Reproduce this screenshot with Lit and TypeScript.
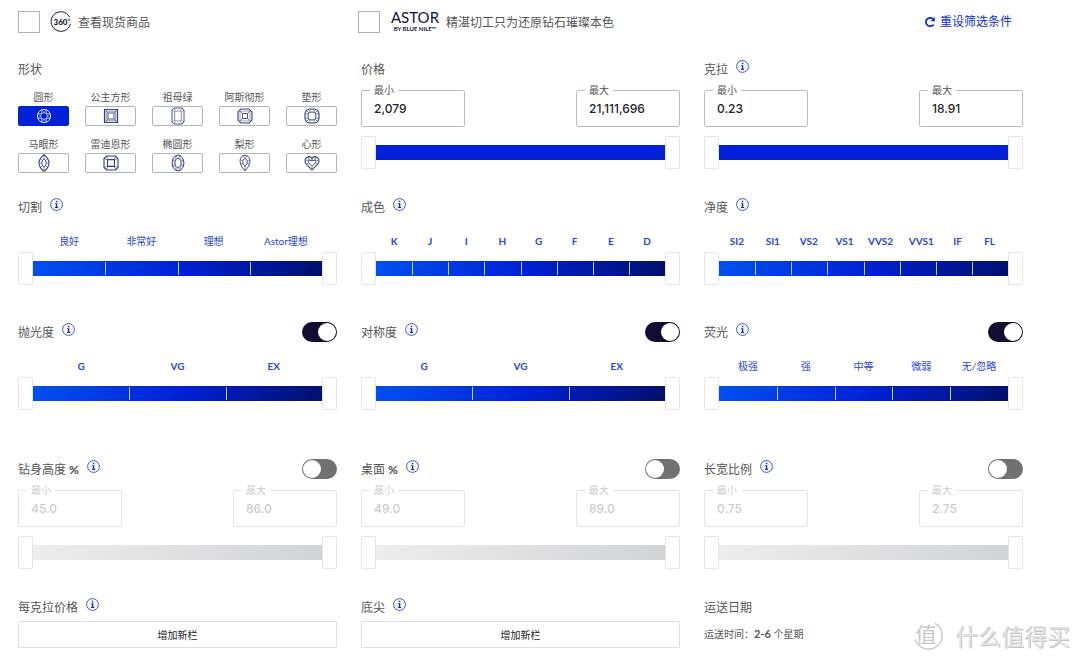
import { LitElement, html, css, svg, nothing, SVGTemplateResult, TemplateResult } from "lit";
import { customElement, property, state } from "lit/decorators.js";
import { classMap } from "lit/directives/class-map.js";
import { styleMap } from "lit/directives/style-map.js";

/* Two-handled slider with an optional row of grade labels and dividers. */
@customElement("range-slider")
export class RangeSlider extends LitElement {
  @property() name = "";
  @property({ type: Array }) grades: string[] = [];
  @property({ type: Array }) weights: number[] = [];
  @property({ type: Boolean }) disabled = false;

  static styles = css`
    :host {
      display: block;
    }
    .grades {
      display: grid;
      padding: 0 15px;
      margin: 17px 0 4px;
      font: 700 10px/14px Lato, "Noto Sans CJK SC", sans-serif;
      color: #2a45df;
      text-align: center;
      white-space: nowrap;
    }
    .grade {
      display: flex;
      justify-content: center;
      font-weight: 700;
    }
    .cjk {
      font-weight: 400;
    }
    .slider {
      display: grid;
      align-items: center;
      height: 33px;
    }
    .bar,
    .handle {
      grid-area: 1 / 1;
    }
    .bar {
      display: flex;
      height: 15px;
      margin: 0 15px;
      background: #0021d8;
    }
    .graded {
      background: linear-gradient(90deg, #0050f0, #0020d6 52%, #00106e);
    }
    .off {
      background: linear-gradient(90deg, #ededed, #d2d3d5);
    }
    .segment {
      flex: 1;
      margin: 1px 0;
      border-left: 1px solid #c3cdf8;
    }
    .segment:first-child {
      border-left-color: transparent;
    }
    .handle {
      appearance: none;
      width: 100%;
      height: 33px;
      margin: 0;
      background: transparent;
      pointer-events: none;
    }
    .handle::-webkit-slider-runnable-track {
      height: 33px;
      background: transparent;
    }
    .handle::-webkit-slider-thumb {
      appearance: none;
      box-sizing: border-box;
      width: 15px;
      height: 33px;
      border: 1px solid #e6e6e6;
      border-radius: 2px;
      background: #fff;
      pointer-events: auto;
    }
  `;

  render() {
    const columns = this.grades.map((_, i) => `${this.weights[i] ?? 1}fr`).join(" ");
    return html`
      ${this.grades.length
        ? html`<div class="grades" style=${styleMap({ gridTemplateColumns: columns })}>
            ${this.grades.map(
              (g) =>
                html`<span class=${classMap({ grade: true, cjk: /[^\x00-\x7f]/.test(g) })}>${g}</span>`
            )}
          </div>`
        : nothing}
      <div class="slider">
        <div class=${classMap({ bar: true, graded: this.grades.length > 0, off: this.disabled })}>
          ${this.grades.map(() => html`<span class="segment"></span>`)}
        </div>
        <input class="handle" type="range" min="0" max="100" value="0"
          aria-label="${this.name} 最小" ?disabled=${this.disabled} />
        <input class="handle" type="range" min="0" max="100" value="100"
          aria-label="${this.name} 最大" ?disabled=${this.disabled} />
      </div>
    `;
  }
}

interface Filter {
  name: string;
  percent?: boolean;
  info?: boolean;
  toggle?: boolean;
  range?: [string, string];
  grades?: string[];
  weights?: number[];
  add?: boolean;
  note?: TemplateResult;
}

const SHAPES: { name: string; art: SVGTemplateResult }[] = [
  {
    name: "圆形",
    art: svg`<circle cx="9" cy="9" r="6.6"/><circle cx="9" cy="9" r="3.4" stroke-width=".7"/>
      <path d="M6.6 2.9 9 5.4 11.4 2.9 11.5 6.5 15.1 6.6 12.6 9 15.1 11.4 11.5 11.5 11.4 15.1 9 12.6 6.6 15.1 6.5 11.5 2.9 11.4 5.4 9 2.9 6.6 6.5 6.5Z" stroke-width=".5"/>`,
  },
  {
    name: "公主方形",
    art: svg`<path d="M2.5 2.5H15.5V15.5H2.5Z" stroke-width="1.2"/><path d="M6 6H12V12H6Z"/>
      <path d="M2.5 2.5 6 6M15.5 2.5 12 6M15.5 15.5 12 12M2.5 15.5 6 12M4.2 4.2H13.8V13.8H4.2Z" stroke-width=".6"/>`,
  },
  {
    name: "祖母绿",
    art: svg`<path d="M5 1H13L15 3V15L13 17H5L3 15V3Z"/><path d="M6.5 4H11.5L12.3 5V13L11.5 14H6.5L5.7 13V5Z" stroke-width=".6"/>
      <path d="M5 1 6.5 4M13 1 11.5 4M15 3 12.3 5M15 15 12.3 13M13 17 11.5 14M5 17 6.5 14M3 15 5.7 13M3 3 5.7 5" stroke-width=".5"/>`,
  },
  {
    name: "阿斯彻形",
    art: svg`<path d="M5 2H13L16 5V13L13 16H5L2 13V5Z" stroke-width="1.1"/><path d="M5.7 4H12.3L14 5.7V12.3L12.3 14H5.7L4 12.3V5.7Z" stroke-width=".5"/>
      <path d="M6.5 6.5H11.5V11.5H6.5Z"/><path d="M3.5 3.5 6.5 6.5M14.5 3.5 11.5 6.5M14.5 14.5 11.5 11.5M3.5 14.5 6.5 11.5" stroke-width=".6"/>`,
  },
  {
    name: "垫形",
    art: svg`<rect x="2" y="2" width="14" height="14" rx="5" stroke-width="1.1"/><path d="M6.5 5.4Q9 4.7 11.5 5.4L12.6 6.5Q13.3 9 12.6 11.5L11.5 12.6Q9 13.3 6.5 12.6L5.4 11.5Q4.7 9 5.4 6.5Z"/>
      <path d="M3.3 3.3 6 6M14.7 3.3 12 6M14.7 14.7 12 12M3.3 14.7 6 12M7 2 6.5 5.4M11 2 11.5 5.4M7 16 6.5 12.6M11 16 11.5 12.6M2 7 5.4 6.5M2 11 5.4 11.5M16 7 12.6 6.5M16 11 12.6 11.5" stroke-width=".6"/>`,
  },
  {
    name: "马眼形",
    art: svg`<path d="M9 .7Q14 4.5 14 9T9 17.3Q4 13.5 4 9T9 .7Z" stroke-width="1.1"/><path d="M9 4.7Q11.2 6.8 11.2 9T9 13.3Q6.8 11.2 6.8 9T9 4.7Z"/>
      <path d="M9 .7V4.7M9 13.3V17.3M4.2 9H6.8M11.2 9H13.8M5.6 4.8 7.9 6.8M12.4 4.8 10.1 6.8M5.6 13.2 7.9 11.2M12.4 13.2 10.1 11.2" stroke-width=".6"/>`,
  },
  {
    name: "雷迪恩形",
    art: svg`<path d="M4.6 2H13.4L16 4.6V13.4L13.4 16H4.6L2 13.4V4.6Z" stroke-width="1.1"/><path d="M6 5.6H12L12.4 6V12L12 12.4H6L5.6 12V6Z" stroke-width="1.1"/>
      <path d="M4.6 2 5.8 5.8 2 4.6M13.4 2 12.2 5.8 16 4.6M13.4 16 12.2 12.2 16 13.4M4.6 16 5.8 12.2 2 13.4" stroke-width=".6"/>`,
  },
  {
    name: "椭圆形",
    art: svg`<ellipse cx="9" cy="9" rx="5.9" ry="7.9" stroke-width="1"/><ellipse cx="9" cy="9" rx="3" ry="4.4" stroke-width=".8"/>
      <path d="M6.8 1.8 9 4.6 11.2 1.8 11.2 6.3 14.2 5.8 12 9 14.2 12.2 11.2 11.7 11.2 16.2 9 13.4 6.8 16.2 6.8 11.7 3.8 12.2 6 9 3.8 5.8 6.8 6.3Z" stroke-width=".5"/>`,
  },
  {
    name: "梨形",
    art: svg`<path d="M9 17Q4 12 4 7.2C4 3.5 6.2 1.3 9 1.3S14 3.5 14 7.2Q14 12 9 17Z"/><path d="M9 4.4 11.3 6.4 11 9.4 9 12.6 7 9.4 6.7 6.4Z"/>
      <path d="M9 12.6V17M7 1.8 9 4.4 11 1.8M4.2 6 6.7 6.4M13.8 6 11.3 6.4M4.8 10.2 7 9.4M13.2 10.2 11 9.4" stroke-width=".6"/>`,
  },
  {
    name: "心形",
    art: svg`<path d="M9 15.8 3 9.8C1.2 7.6 2 3 5.6 2.6 7.2 2.5 8.4 3.2 9 4.4 9.6 3.2 10.8 2.5 12.4 2.6 16 3 16.8 7.6 15 9.8Z" stroke-width="1.1"/>
      <path d="M9 12.4 5.6 8.8 5.8 6 9 6.6 12.2 6 12.4 8.8Z"/><path d="M9 4.4V6.6M9 12.4V15.8M2.4 6.6 5.8 6 5.6 2.6M15.6 6.6 12.2 6 12.4 2.6M3.4 10.2 5.6 8.8M14.6 10.2 12.4 8.8" stroke-width=".6"/>`,
  },
];

const FILTERS: Filter[] = [
  { name: "价格", range: ["2,079", "21,111,696"] },
  { name: "克拉", info: true, range: ["0.23", "18.91"] },
  { name: "切割", info: true, grades: ["良好", "非常好", "理想", "Astor理想"] },
  { name: "成色", info: true, grades: ["K", "J", "I", "H", "G", "F", "E", "D"] },
  {
    name: "净度",
    info: true,
    grades: ["SI2", "SI1", "VS2", "VS1", "VVS2", "VVS1", "IF", "FL"],
    weights: [36, 36, 36, 36, 36, 46, 27, 37],
  },
  { name: "抛光度", info: true, toggle: true, grades: ["G", "VG", "EX"] },
  { name: "对称度", info: true, toggle: true, grades: ["G", "VG", "EX"] },
  { name: "荧光", info: true, toggle: true, grades: ["极强", "强", "中等", "微弱", "无/忽略"] },
  { name: "钻身高度", percent: true, info: true, toggle: false, range: ["45.0", "86.0"] },
  { name: "桌面", percent: true, info: true, toggle: false, range: ["49.0", "89.0"] },
  { name: "长宽比例", info: true, toggle: false, range: ["0.75", "2.75"] },
  { name: "每克拉价格", info: true, add: true },
  { name: "底尖", info: true, add: true },
  { name: "运送日期", note: html`运送时间：<b class="weeks">2-6</b> 个星期` },
];

@customElement("app-root")
export class AppRoot extends LitElement {
  @state() private shape = "圆形";
  @state() private active: Record<string, boolean> = Object.fromEntries(
    FILTERS.filter((f) => f.toggle !== undefined).map((f) => [f.name, f.toggle!])
  );

  static styles = css`
    :host {
      display: block;
      position: relative;
      box-sizing: border-box;
      min-height: 100vh;
      background: #fff;
      color: #555;
      font: 400 12px/20px Lato, "Noto Sans CJK SC", sans-serif;
    }
    button,
    input {
      font: inherit;
      color: inherit;
    }
    button {
      padding: 0;
      border: 0;
      background: none;
      cursor: pointer;
    }
    .top {
      display: grid;
      grid-template-columns: repeat(3, 1fr);
      gap: 26px;
      align-items: center;
      padding: 11px 68px 0 18px;
      white-space: nowrap;
    }
    .option {
      display: flex;
      align-items: center;
      height: 22px;
    }
    .caption {
      padding-top: 2px;
    }
    .tick {
      appearance: none;
      flex: none;
      box-sizing: border-box;
      width: 22px;
      height: 22px;
      margin: 0 10px 0 0;
      border: 1px solid #b0b0b0;
      background: #fff;
    }
    .tick:checked {
      background: #0021d8;
    }
    .logo {
      flex: none;
      margin-right: 6px;
      overflow: visible;
      fill: #14123c;
      font-family: Lato, sans-serif;
    }
    .reset {
      display: flex;
      align-items: center;
      justify-self: end;
      gap: 4px;
      color: #0a2bdc;
      text-decoration: none;
    }
    .filters {
      display: grid;
      grid-template-columns: repeat(3, 1fr);
      grid-template-rows: minmax(138px, auto) minmax(125px, auto) minmax(137px, auto) minmax(138px, auto) auto;
      column-gap: 24px;
      padding: 26px 57px 12px 18px;
    }
    .heading {
      display: flex;
      align-items: center;
      height: 20px;
    }
    .title {
      margin: 0;
      padding-top: 2px;
      font: inherit;
    }
    .percent {
      font-weight: 900;
    }
    .info {
      display: flex;
      margin: 0 auto 5px 8px;
    }
    .switch {
      appearance: none;
      display: flex;
      box-sizing: border-box;
      width: 35px;
      height: 20px;
      margin: 0 0 0 auto;
      padding: 1px;
      border-radius: 10px;
      background: #717171;
      cursor: pointer;
    }
    .switch::before {
      content: "";
      width: 18px;
      height: 18px;
      border-radius: 50%;
      background: #fff;
    }
    .switch:checked {
      justify-content: flex-end;
      background: #120d31;
    }
    .shapes {
      display: grid;
      grid-template-columns: repeat(5, 1fr);
      gap: 11px 16px;
      margin-top: 11px;
    }
    .shape {
      display: grid;
      gap: 2px;
      font-size: 10px;
      line-height: 14px;
      white-space: nowrap;
    }
    .name {
      display: flex;
      justify-content: center;
    }
    .tile {
      display: flex;
      align-items: center;
      justify-content: center;
      box-sizing: border-box;
      height: 20px;
      border: 1px solid #b3b3b3;
      border-radius: 2px;
      color: #34427a;
    }
    .picked {
      border-color: #0021d8;
      background: #0021d8;
      color: #fff;
    }
    .art {
      fill: none;
      stroke: currentColor;
      stroke-width: 0.9;
    }
    .fields {
      display: flex;
      justify-content: space-between;
      margin: 4px 0 9px;
    }
    .field {
      box-sizing: border-box;
      width: 104px;
      min-width: 0;
      height: 44px;
      margin: 0;
      padding: 0 0 5px;
      border: 1px solid #bdbdbd;
      border-radius: 2px;
    }
    .legend {
      margin-left: 8px;
      padding: 0 4px;
      font-size: 10px;
      line-height: 14px;
    }
    .value {
      display: block;
      box-sizing: border-box;
      width: 100%;
      height: 24px;
      padding: 0 0 0 12px;
      border: 0;
      outline: 0;
      background: transparent;
      color: #222;
      font: 500 12px/24px Inter, sans-serif;
    }
    .muted {
      border-color: #e3e3e3;
    }
    .muted .legend,
    .muted .value {
      color: #ccc;
    }
    .add {
      width: 100%;
      height: 27px;
      margin-top: 4px;
      border: 1px solid #e0e0e0;
      border-radius: 1px;
      color: #222;
      font-size: 10px;
    }
    .note {
      margin: 7px 0 0;
      font-size: 10px;
    }
    .weeks {
      font-size: 11px;
    }
    .watermark {
      position: absolute;
      right: 10px;
      bottom: 11px;
      display: flex;
      align-items: center;
      gap: 11px;
      color: #e2e2e2;
      font: 400 23px/32px "Noto Sans CJK SC", sans-serif;
      text-shadow: 1px 1px 0 #c4c4c4;
      pointer-events: none;
    }
    .seal {
      overflow: visible;
      fill: none;
      stroke: #cfcfcf;
      stroke-width: 1.6;
    }
    .glyph {
      fill: #c6c6c6;
      stroke: none;
      text-shadow: none;
    }
  `;

  private toggle(name: string, e: Event) {
    this.active = { ...this.active, [name]: (e.target as HTMLInputElement).checked };
  }

  private infoButton(name: string) {
    return html`<button class="info" aria-label="${name} 说明">
      <svg width="13" height="13" viewBox="0 0 13 13">
        <circle cx="6.5" cy="6.5" r="5.9" fill="none" stroke="#2a43e0" stroke-width=".9" />
        <path d="M5.8 2.8h1.5v1.5H5.8zM5 5.2h2.3v3.9h.9V10H4.9v-.9h.9V6.1H5z" fill="#0a2bdc" />
      </svg>
    </button>`;
  }

  private field(filter: Filter, i: number, muted: boolean) {
    const id = `${filter.name}-${i}`;
    return html`<fieldset class=${classMap({ field: true, muted })}>
      <legend class="legend"><label for=${id}>${i ? "最大" : "最小"}</label></legend>
      <input class="value" id=${id} type="text" .value=${filter.range![i]} ?disabled=${muted} />
    </fieldset>`;
  }

  private filter(f: Filter) {
    const off = f.toggle !== undefined && !this.active[f.name];
    return html`<section class="filter">
      <div class="heading">
        <h2 class="title">${f.name}${f.percent ? html` <span class="percent">%</span>` : nothing}</h2>
        ${f.info ? this.infoButton(f.name) : nothing}
        ${f.toggle !== undefined
          ? html`<input class="switch" type="checkbox" role="switch" aria-label=${f.name}
              .checked=${!off} @change=${(e: Event) => this.toggle(f.name, e)} />`
          : nothing}
      </div>
      ${f.range ? html`<div class="fields">${this.field(f, 0, off)}${this.field(f, 1, off)}</div>` : nothing}
      ${f.range || f.grades
        ? html`<range-slider .name=${f.name} .grades=${f.grades ?? []} .weights=${f.weights ?? []}
            .disabled=${off}></range-slider>`
        : nothing}
      ${f.add ? html`<button class="add">增加新栏</button>` : nothing}
      ${f.note ? html`<p class="note">${f.note}</p>` : nothing}
    </section>`;
  }

  render() {
    return html`
      <header class="top">
        <label class="option">
          <input class="tick" type="checkbox" />
          <svg class="logo" width="22" height="22" viewBox="0 0 22 22">
            <path d="M19.6 6A9.8 9.8 0 1 0 20.4 13" fill="none" stroke="#14123c" />
            <text x="10.5" y="13.6" text-anchor="middle" font-size="8" font-weight="900">360</text>
            <circle cx="19" cy="8.6" r=".9" fill="none" stroke="#14123c" stroke-width=".6" />
          </svg>
          <span class="caption">查看现货商品</span>
        </label>
        <label class="option">
          <input class="tick" type="checkbox" />
          <svg class="logo" width="50" height="32" viewBox="0 -5 50 32">
            <text x="25" y="12" text-anchor="middle" font-size="15">ASTOR</text>
            <text x="25" y="20" text-anchor="middle" font-size="6" font-weight="700">BY BLUE NILE™</text>
          </svg>
          <span class="caption">精湛切工只为还原钻石璀璨本色</span>
        </label>
        <a class="reset" href="#">
          <svg width="12" height="12" viewBox="0 0 12 12">
            <path d="M9.6 8.4A4.2 4.2 0 1 1 9 3" fill="none" stroke="#0a2bdc" stroke-width="1.8" />
            <path d="M10.9 1V5.3H6.6Z" fill="#0a2bdc" />
          </svg>
          重设筛选条件
        </a>
      </header>
      <main class="filters">
        <section class="filter">
          <div class="heading"><h2 class="title">形状</h2></div>
          <div class="shapes">
            ${SHAPES.map(
              (s) => html`<button class="shape" aria-pressed=${s.name === this.shape ? "true" : "false"}
                @click=${() => (this.shape = s.name)}>
                <span class="name">${s.name}</span>
                <span class=${classMap({ tile: true, picked: s.name === this.shape })}>
                  <svg class="art" width="18" height="18" viewBox="0 0 18 18">${s.art}</svg>
                </span>
              </button>`
            )}
          </div>
        </section>
        ${FILTERS.map((f) => this.filter(f))}
      </main>
      <div class="watermark">
        <svg class="seal" width="32" height="32" viewBox="0 0 32 32">
          <path d="M23 4.2A13.8 13.8 0 1 1 3.2 20.5" />
          <text class="glyph" x="14" y="23" text-anchor="middle" font-size="21">值</text>
        </svg>
        <span>什么值得买</span>
      </div>
    `;
  }
}
